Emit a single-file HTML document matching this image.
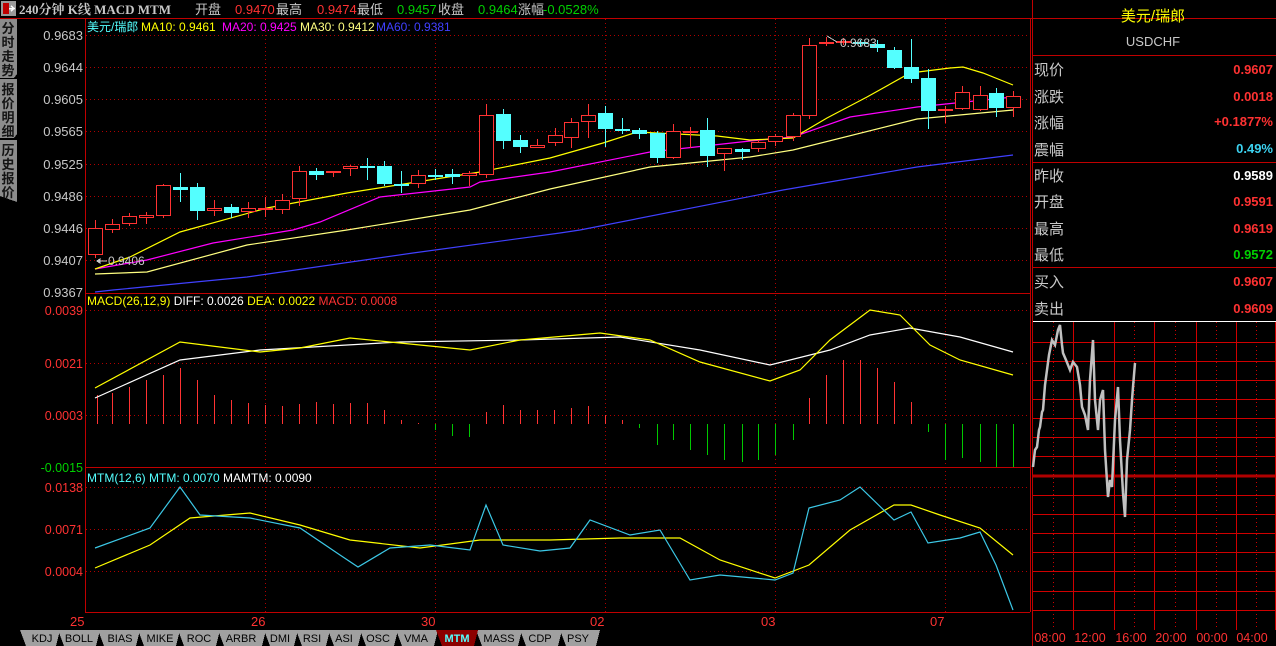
<!DOCTYPE html>
<html><head><meta charset="utf-8">
<style>
html,body{margin:0;padding:0;background:#000;}
body{width:1276px;height:646px;overflow:hidden;position:relative;font-family:"Liberation Sans","Noto Sans CJK SC",sans-serif;}
svg{position:absolute;left:0;top:0;}
</style></head>
<body>
<svg width="1276" height="646" viewBox="0 0 1276 646" xmlns="http://www.w3.org/2000/svg" font-family="Liberation Sans, Noto Sans CJK SC, sans-serif" font-size="12" shape-rendering="crispEdges">
<rect width="1276" height="646" fill="#000"/>
<!-- top bar -->
<rect x="1" y="1" width="15" height="15" fill="#9a9a9a"/>
<rect x="3" y="3" width="6" height="11" fill="#c00000"/>
<path d="M9 8.5h5M11 6l3 2.5-3 2.5" stroke="#fff" fill="none" stroke-width="1.5"/>
<text x="19" y="14" fill="#c8c8c8" font-weight="bold" font-family="Liberation Serif, Noto Serif CJK SC, serif" font-size="13">240分钟 K线 MACD MTM</text>
<g font-size="13">
<text x="195" y="14" fill="#c8c8c8">开盘</text>
<text x="235" y="14" fill="#ff3232">0.9470</text>
<text x="276" y="14" fill="#c8c8c8">最高</text>
<text x="317" y="14" fill="#ff3232">0.9474</text>
<text x="357" y="14" fill="#c8c8c8">最低</text>
<text x="397" y="14" fill="#00d000">0.9457</text>
<text x="438" y="14" fill="#c8c8c8">收盘</text>
<text x="478" y="14" fill="#00d000">0.9464</text>
<text x="518" y="14" fill="#c8c8c8">涨幅</text>
<text x="543" y="14" fill="#00d000">-0.0528%</text>
</g>
<line x1="0" y1="18.5" x2="1276" y2="18.5" stroke="#c00000"/>
<!-- left tabs -->
<g>
<path d="M0 19h17v55l-3 4H0z" fill="#8c8c8c"/>
<path d="M0 79h17v55l-3 4H0z" fill="#8c8c8c"/>
<path d="M0 140h17v62l-17-6z" fill="#8c8c8c"/>
<g fill="#141414" font-size="13" font-weight="bold" text-anchor="middle">
<text x="8" y="33">分</text><text x="8" y="47">时</text><text x="8" y="61">走</text><text x="8" y="75">势</text>
<text x="8" y="94">报</text><text x="8" y="108">价</text><text x="8" y="122">明</text><text x="8" y="136">细</text>
<text x="8" y="155">历</text><text x="8" y="169">史</text><text x="8" y="183">报</text><text x="8" y="197">价</text>
</g>
</g>
<!-- grid -->
<g stroke="#b00000" stroke-dasharray="1,3">
<path d="M86 35.5H1030M86 67.5H1030M86 99.5H1030M86 131.5H1030M86 164.5H1030M86 196.5H1030M86 228.5H1030M86 260.5H1030"/>
<path d="M86 310.5H1030M86 363.5H1030M86 415.5H1030"/>
<path d="M86 487.5H1030M86 529.5H1030M86 571.5H1030"/>
<path d="M265.5 19V612M435.5 19V612M605.5 19V612M775.5 19V612M945.5 19V612"/>
</g>
<g stroke="#c00000" fill="none">
<path d="M85.5 18V612M1030.5 18V612M85 293.5H1030M85 467.5H1030M85 612.5H1030"/>
</g>
<!-- axis labels -->
<g fill="#c8c8c8" font-size="13" text-anchor="end">
<text x="83" y="40">0.9683</text><text x="83" y="72">0.9644</text><text x="83" y="104">0.9605</text><text x="83" y="136">0.9565</text><text x="83" y="169">0.9525</text><text x="83" y="201">0.9486</text><text x="83" y="233">0.9446</text><text x="83" y="265">0.9407</text><text x="83" y="297">0.9367</text>
</g>
<g fill="#ff3232" font-size="12.5" text-anchor="end">
<text x="83" y="315">0.0039</text><text x="83" y="368">0.0021</text><text x="83" y="420">0.0003</text><text x="83" y="472" fill="#00d000">-0.0015</text>
<text x="83" y="492">0.0138</text><text x="83" y="534">0.0071</text><text x="83" y="576">0.0004</text>
</g>
<g fill="#ff3232" font-size="13">
<text x="70" y="626">25</text><text x="251" y="626">26</text><text x="421" y="626">30</text><text x="590" y="626">02</text><text x="761" y="626">03</text><text x="930" y="626">07</text>
</g>
<!-- legends -->
<g font-size="12">
<text x="87" y="31" fill="#54ffff">美元/瑞郎</text>
<text x="141" y="31" fill="#ffff00">MA10: 0.9461</text>
<text x="222" y="31" fill="#ff00ff">MA20: 0.9425</text>
<text x="300" y="31" fill="#ffff80">MA30: 0.9412</text>
<text x="376" y="31" fill="#4040ff">MA60: 0.9381</text>
<text x="87" y="305" fill="#ffff00">MACD(26,12,9) <tspan fill="#ffffff">DIFF: 0.0026</tspan> <tspan fill="#ffff00">DEA: 0.0022</tspan> <tspan fill="#ff3232">MACD: 0.0008</tspan></text>
<text x="87" y="482" fill="#54ffff">MTM(12,6) MTM: 0.0070 <tspan fill="#ffffff">MAMTM: 0.0090</tspan></text>
</g>
<!-- MAs -->
<g fill="none" stroke-width="1.2" shape-rendering="auto">
<polyline stroke="#4040ff" points="95,292 113,290 247,277 413,253 560,233 580,230 783,190 917,167 1013,155"/>
<polyline stroke="#ffff80" points="95,274 147,272 247,245 347,230 470,210 550,189 650,167 750,157 793,150 917,119 1013,110"/>
<polyline stroke="#ff00ff" points="95,269 147,260 213,243 293,230 320,222 380,197 470,187 480,182 550,172 650,152 750,141 793,137 850,117 917,107 1013,97"/>
<polyline stroke="#ffff00" points="95,269 130,257 180,232 267,208 347,193 480,172 550,158 603,143 637,132 717,136 750,140 793,138 827,118 867,97 910,73 950,68 963,67 983,73 1013,85"/>
</g>
<!-- candles -->
<g stroke="#ff3232" fill="#000">
<path d="M95.5 220V258M112.5 219V233M129.5 213V226M146.5 212V224M163.5 184V218M214.5 200V216M248.5 202V218M265.5 197V217M282.5 194V214M299.5 166V206M333.5 171V177M350.5 165V176M418.5 170V188M469.5 171V186M486.5 104V178M537.5 139V148M555.5 128V146M571.5 118V148M588.5 104V138M673.5 124V159M690.5 127V148M724.5 148V171M758.5 140V152M775.5 134V146M793.5 113V141M809.5 38V119M826.5 37V46M843.5 38V45M945.5 106V123M962.5 86V110M980.5 86V111M1013.5 91V117"/>
<rect x="88.5" y="228.5" width="14" height="26"/><rect x="105.5" y="224.5" width="14" height="5"/><rect x="122.5" y="216.5" width="14" height="7"/><rect x="139.5" y="215.5" width="14" height="2"/><rect x="156.5" y="185.5" width="14" height="30"/><rect x="207.5" y="208.5" width="14" height="2"/><rect x="241.5" y="208.5" width="14" height="3"/><rect x="258.5" y="208.5" width="14" height="1"/><rect x="275.5" y="200.5" width="14" height="9"/><rect x="292.5" y="171.5" width="14" height="27"/><rect x="326.5" y="171.5" width="14" height="1"/><rect x="343.5" y="166.5" width="14" height="2"/><rect x="411.5" y="175.5" width="14" height="8"/><rect x="462.5" y="173.5" width="14" height="2"/><rect x="479.5" y="115.5" width="14" height="59"/><rect x="530.5" y="145.5" width="14" height="2"/><rect x="548.5" y="135.5" width="14" height="7"/><rect x="564.5" y="122.5" width="14" height="15"/><rect x="581.5" y="115.5" width="14" height="6"/><rect x="666.5" y="131.5" width="14" height="26"/><rect x="683.5" y="131.5" width="14" height="1"/><rect x="717.5" y="148.5" width="14" height="5"/><rect x="751.5" y="142.5" width="14" height="6"/><rect x="768.5" y="136.5" width="14" height="5"/><rect x="786.5" y="115.5" width="14" height="21"/><rect x="802.5" y="45.5" width="14" height="70"/><rect x="819.5" y="42.5" width="14" height="1"/><rect x="836.5" y="41.5" width="14" height="1"/><rect x="938.5" y="109.5" width="14" height="1"/><rect x="955.5" y="92.5" width="14" height="16"/><rect x="973.5" y="95.5" width="14" height="14"/><rect x="1006.5" y="96.5" width="14" height="11"/>
</g>
<g stroke="#54ffff" fill="#54ffff">
<path d="M180.5 173V202M197.5 183V220M231.5 204V218M316.5 168V180M367.5 158V180M384.5 161V186M401.5 171V193M435.5 169V180M452.5 169V184M503.5 109V149M520.5 135V153M605.5 106V147M622.5 118V134M639.5 128V139M657.5 131V163M707.5 118V167M742.5 148V160M860.5 40V46M877.5 40V52M894.5 47V69M911.5 39V83M928.5 69V129M996.5 88V117"/>
<rect x="173" y="187" width="15" height="3" stroke="none"/><rect x="190.5" y="187.5" width="14" height="23"/><rect x="224.5" y="207.5" width="14" height="5"/><rect x="309.5" y="171.5" width="14" height="3"/><rect x="360" y="166" width="15" height="2" stroke="none"/><rect x="377.5" y="166.5" width="14" height="17"/><rect x="394" y="184" width="15" height="2" stroke="none"/><rect x="428" y="175" width="15" height="2" stroke="none"/><rect x="445.5" y="174.5" width="14" height="2"/><rect x="496.5" y="114.5" width="14" height="26"/><rect x="513.5" y="140.5" width="14" height="6"/><rect x="598.5" y="113.5" width="14" height="15"/><rect x="615" y="129" width="15" height="2" stroke="none"/><rect x="632.5" y="130.5" width="14" height="3"/><rect x="650.5" y="133.5" width="14" height="24"/><rect x="700.5" y="130.5" width="14" height="25"/><rect x="735.5" y="149.5" width="14" height="2"/><rect x="853" y="42" width="15" height="2" stroke="none"/><rect x="870.5" y="44.5" width="14" height="3"/><rect x="887.5" y="50.5" width="14" height="17"/><rect x="904.5" y="67.5" width="14" height="11"/><rect x="921.5" y="78.5" width="14" height="32"/><rect x="989.5" y="93.5" width="14" height="14"/>
</g>
<!-- annotations -->
<g fill="#c8c8c8" font-size="12">
<path d="M97 261h10M97 261l3-2v4z" stroke="#c8c8c8" fill="#c8c8c8"/>
<text x="108" y="265">0.9406</text>
<path d="M827 36l10 6" stroke="#c8c8c8"/>
<text x="840" y="47">0.9683</text>
</g>
<!-- MACD bars -->
<g stroke="#ff3232">
<path d="M97.5 424V395M112.5 424V393M129.5 424V387M146.5 424V380M163.5 424V375M180.5 424V368M197.5 424V380M214.5 424V395M231.5 424V400M248.5 424V403M265.5 424V405M282.5 424V406M299.5 424V404M316.5 424V402M333.5 424V404M350.5 424V403M367.5 424V403M384.5 424V410M401.5 424V420M418.5 424V423M486.5 424V412M503.5 424V405M520.5 424V410M537.5 424V410M554.5 424V410M571.5 424V408M588.5 424V406M605.5 424V415M622.5 424V420M809.5 424V398M826.5 424V375M843.5 424V360M860.5 424V360M877.5 424V368M894.5 424V382M911.5 424V402"/>
</g>
<g stroke="#00c800">
<path d="M435.5 424V430M452.5 424V436M469.5 424V437M639.5 424V428M657.5 424V445M673.5 424V440M690.5 424V450M707.5 424V455M724.5 424V460M742.5 424V462M758.5 424V460M775.5 424V455M793.5 424V440M928.5 424V432M945.5 424V460M962.5 424V458M980.5 424V462M996.5 424V467M1013.5 424V467"/>
</g>
<g fill="none" stroke-width="1.2" shape-rendering="auto">
<polyline stroke="#ffffff" points="95,398 180,360 260,350 400,342 520,340 620,337 700,350 770,365 830,350 870,335 910,328 960,337 1013,352"/>
<polyline stroke="#ffff00" points="95,388 180,342 260,352 300,348 350,338 420,345 470,350 520,340 600,333 650,340 700,362 770,381 800,370 830,340 870,310 900,315 930,345 960,360 1013,375"/>
<polyline stroke="#ffff00" points="95,568 150,545 190,518 250,513 300,525 350,540 420,548 480,540 550,540 620,538 680,538 720,560 775,578 809,565 850,530 894,505 911,505 940,515 980,528 1013,555"/>
<polyline stroke="#3cc8e6" points="95,548 150,528 180,487 200,515 250,518 300,528 340,555 358,567 390,548 430,545 470,550 486,505 503,545 540,551 570,548 590,520 630,535 660,530 690,580 720,575 775,580 793,573 809,508 840,500 860,487 894,520 911,512 928,543 960,538 980,532 996,565 1013,610"/>
</g>
<!-- bottom tabs -->
<g font-size="11" text-anchor="middle" fill="#000">
<g fill="#a0a0a0">
<path d="M20 630h40l-4 16H26z"/><path d="M58 630h42l-4 16H64z"/><path d="M98 630h42l-4 16h-32z"/><path d="M138 630h42l-4 16h-32z"/><path d="M178 630h42l-4 16h-32z"/><path d="M218 630h48l-4 16h-38z"/><path d="M264 630h34l-4 16h-24z"/><path d="M296 630h34l-4 16h-24z"/><path d="M328 630h34l-4 16h-24z"/><path d="M360 630h38l-4 16h-28z"/><path d="M396 630h42l-4 16h-32z"/><path d="M476 630h46l-4 16h-36z"/><path d="M520 630h42l-4 16h-32z"/><path d="M560 630h40l-4 16h-30z"/>
</g>
<path d="M436 630h42l-4 16h-32z" fill="#8c0000"/>
<text x="42" y="642">KDJ</text><text x="79" y="642">BOLL</text><text x="120" y="642">BIAS</text><text x="160" y="642">MIKE</text><text x="199" y="642">ROC</text><text x="241" y="642">ARBR</text><text x="280" y="642">DMI</text><text x="312" y="642">RSI</text><text x="344" y="642">ASI</text><text x="378" y="642">OSC</text><text x="416" y="642">VMA</text>
<text x="457" y="642" fill="#54ffff" font-weight="bold">MTM</text>
<text x="499" y="642">MASS</text><text x="540" y="642">CDP</text><text x="578" y="642">PSY</text>
</g>
<!-- right panel -->
<g>
<line x1="1032.5" y1="0" x2="1032.5" y2="646" stroke="#c00000"/>
<text x="1153" y="21" fill="#ffff00" font-size="15" text-anchor="middle">美元/瑞郎</text>
<text x="1153" y="46" fill="#c8c8c8" font-size="13" text-anchor="middle">USDCHF</text>
<path d="M1033 55.5H1276M1033 162.5H1276M1033 267.5H1276" stroke="#c00000"/>
<line x1="1033" y1="321.5" x2="1276" y2="321.5" stroke="#ffffff"/>
<g fill="#c8c8c8" font-size="15">
<text x="1034" y="75">现价</text><text x="1034" y="102">涨跌</text><text x="1034" y="128">涨幅</text><text x="1034" y="155">震幅</text>
<text x="1034" y="181">昨收</text><text x="1034" y="207">开盘</text><text x="1034" y="234">最高</text><text x="1034" y="260">最低</text>
<text x="1034" y="287">买入</text><text x="1034" y="314">卖出</text>
</g>
<g font-size="13" font-weight="bold" text-anchor="end">
<text x="1273" y="74" fill="#ff3232">0.9607</text><text x="1273" y="101" fill="#ff3232">0.0018</text><text x="1273" y="126" fill="#ff3232">+0.1877%</text><text x="1273" y="153" fill="#3cd2f0">0.49%</text>
<text x="1273" y="180" fill="#ffffff">0.9589</text><text x="1273" y="206" fill="#ff3232">0.9591</text><text x="1273" y="233" fill="#ff3232">0.9619</text><text x="1273" y="259" fill="#00d000">0.9572</text>
<text x="1273" y="286" fill="#ff3232">0.9607</text><text x="1273" y="313" fill="#ff3232">0.9609</text>
</g>
<g stroke="#d00000">
<path d="M1033 342.5H1276M1033 361.5H1276M1033 380.5H1276M1033 399.5H1276M1033 418.5H1276M1033 437.5H1276M1033 456.5H1276M1033 495.5H1276M1033 514.5H1276M1033 533.5H1276M1033 552.5H1276M1033 571.5H1276M1033 591.5H1276M1033 610.5H1276"/>
<path d="M1033 476H1276" stroke-width="3" stroke="#b00000"/>
<path d="M1073.5 322V630M1114.5 322V630M1154.5 322V630M1196.5 322V630M1236.5 322V630M1275.5 322V630"/>
<path d="M1053.5 322V630M1134.5 322V630M1175.5 322V630M1216.5 322V630M1256.5 322V630" stroke-dasharray="1,3"/>
</g>
<polyline fill="none" stroke="#c0c0c0" stroke-width="2.5" shape-rendering="auto" points="1033,467 1035,450 1037,447 1039,430 1040,427 1042,412 1043,410 1045,385 1047,370 1049,355 1052,340 1055,345 1058,330 1060,325 1062,345 1063,353 1066,360 1070,370 1073,362 1077,367 1080,385 1082,407 1085,415 1088,430 1090,380 1093,340 1095,400 1098,430 1100,400 1103,390 1105,450 1108,497 1110,480 1112,487 1115,420 1118,387 1120,440 1123,493 1125,517 1127,460 1130,430 1132,400 1133,387 1135,363"/>
<g fill="#ff3232" font-size="12.5" text-anchor="middle">
<text x="1050" y="642">08:00</text><text x="1090" y="642">12:00</text><text x="1131" y="642">16:00</text><text x="1171" y="642">20:00</text><text x="1212" y="642">00:00</text><text x="1252" y="642">04:00</text>
</g>
</g>
</svg>
</body></html>
